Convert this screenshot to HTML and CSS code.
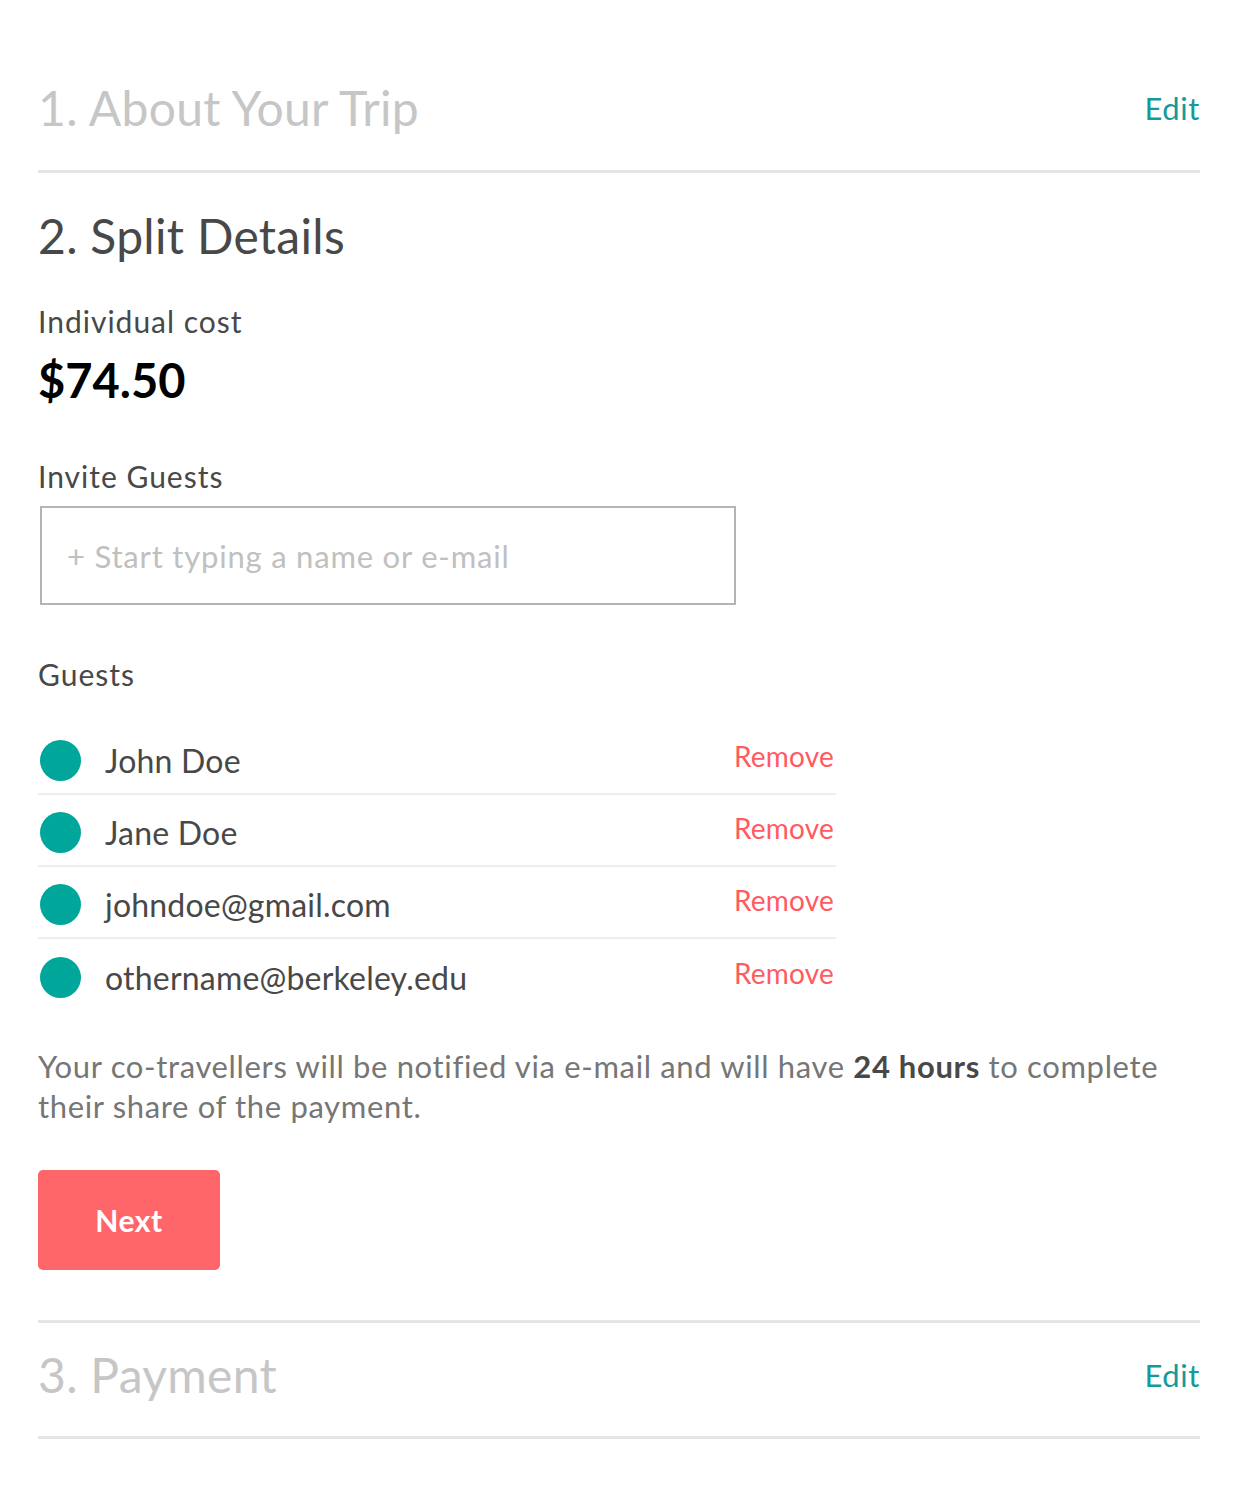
FILE: index.html
```html
<!DOCTYPE html>
<html>
<head>
<meta charset="utf-8">
<link rel="stylesheet" href="styles.css">
</head>
<body>
<div class="page">
  <div class="step-head step-done">
    <h2 class="step-title muted">1. About Your Trip</h2>
    <a class="edit">Edit</a>
  </div>

  <section class="split">
    <h2 class="step-title">2. Split Details</h2>
    <div class="label">Individual cost</div>
    <div class="amount">$74.50</div>

    <div class="label invite-label">Invite Guests</div>
    <div class="invite-box"><span class="placeholder">+ Start typing a name or e-mail</span></div>

    <div class="label guests-label">Guests</div>
    <ul class="guests">
      <li class="guest"><span class="dot"></span><span class="name">John Doe</span><a class="remove">Remove</a></li>
      <li class="guest"><span class="dot"></span><span class="name">Jane Doe</span><a class="remove">Remove</a></li>
      <li class="guest"><span class="dot"></span><span class="name">johndoe@gmail.com</span><a class="remove">Remove</a></li>
      <li class="guest"><span class="dot"></span><span class="name">othername@berkeley.edu</span><a class="remove">Remove</a></li>
    </ul>

    <p class="note">Your co-travellers will be notified via e-mail and will have <strong>24 hours</strong> to complete their share of the payment.</p>

    <button class="next">Next</button>
  </section>

  <div class="step-head step-last">
    <h2 class="step-title muted">3. Payment</h2>
    <a class="edit">Edit</a>
  </div>
</div>
</body>
</html>
```

FILE: styles.css
```css
html, body {
  margin: 0;
  padding: 0;
  background: #ffffff;
}
body {
  font-family: "Lato", "Open Sans", sans-serif;
  color: #484848;
}
.page {
  padding: 78px 60px 60px 38px;
}
.step-head {
  display: flex;
  justify-content: space-between;
  align-items: center;
  border-bottom: 3px solid #e4e6e6;
  padding-bottom: 32px;
}
.step-last {
  border-top: 3px solid #e4e6e6;
  padding-top: 22px;
  padding-bottom: 31px;
  margin-top: 50px;
}
.step-title {
  margin: 0;
  font-size: 48px;
  line-height: 60px;
  font-weight: 400;
  color: #484848;
  letter-spacing: 0.3px;
}
.step-title.muted {
  color: #c6c6c6;
}
.edit {
  color: #159a9a;
  font-size: 31px;
  line-height: 40px;
  letter-spacing: 0.6px;
}
.split {
  padding-top: 33px;
}
.split .step-title {
  margin-bottom: 37px;
}
.label {
  font-size: 30px;
  line-height: 36px;
  color: #484848;
  letter-spacing: 1px;
}
.amount {
  font-size: 47px;
  line-height: 56px;
  font-weight: 700;
  color: #000000;
  margin-top: 13px;
}
.invite-label {
  margin-top: 50px;
}
.invite-box {
  box-sizing: border-box;
  width: 696px;
  height: 99px;
  margin-top: 12px;
  margin-left: 2px;
  border: 2px solid #b4b4b4;
  display: flex;
  align-items: center;
  padding-left: 25px;
}
.placeholder {
  font-size: 31px;
  color: #c0c0c0;
  letter-spacing: 0.8px;
}
.guests-label {
  margin-top: 51px;
}
.guests {
  list-style: none;
  margin: 31px 0 0 0;
  padding: 0;
  width: 798px;
}
.guest {
  display: flex;
  align-items: center;
  box-sizing: border-box;
  height: 72px;
  padding-top: 4px;
  border-bottom: 2px solid #eeeeee;
}
.guest:last-child {
  border-bottom: none;
}
.dot {
  width: 41px;
  height: 41px;
  border-radius: 50%;
  background: #00a699;
  margin-left: 2px;
  flex: none;
}
.name {
  margin-left: 24px;
  font-size: 32px;
  color: #484848;
  flex: 1;
  letter-spacing: 0.2px;
}
.remove {
  color: #ff5a5f;
  font-size: 28px;
  position: relative;
  top: -4px;
  margin-right: 2px;
  letter-spacing: 0.2px;
}
.note {
  margin: 35px 0 0 0;
  font-size: 31px;
  line-height: 40px;
  color: #767676;
  letter-spacing: 0.65px;
}
.note strong {
  color: #484848;
  font-weight: 700;
}
.next {
  margin-top: 44px;
  width: 182px;
  height: 100px;
  border: none;
  border-radius: 5px;
  background: #ff666a;
  color: #ffffff;
  font-family: "Lato", sans-serif;
  font-size: 30px;
  font-weight: 700;
  letter-spacing: 0.5px;
}
```
